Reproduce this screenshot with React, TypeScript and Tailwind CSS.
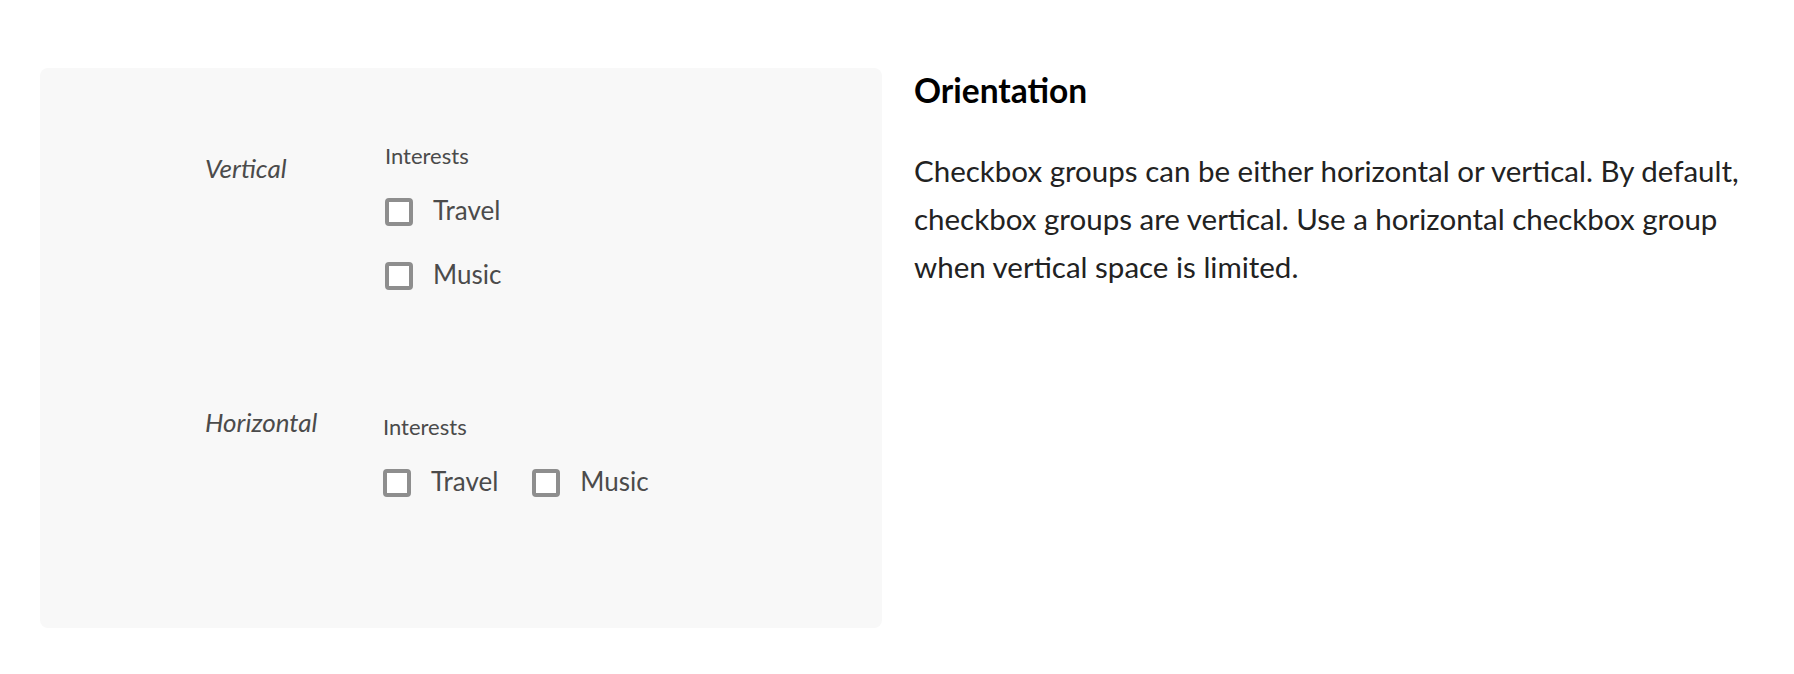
import React from 'react';

const font = { fontFamily: 'Lato, "Noto Sans", sans-serif' };

function Box() {
  return <span className="block h-[28px] w-[28px] shrink-0 rounded-[4px] border-[4px] border-[#8e8e8e] bg-white" />;
}

function CheckItem({ label, gap }: { label: string; gap: string }) {
  return (
    <label className={`flex h-[40px] items-center ${gap}`}>
      <Box />
      <span className="pb-[4px] text-[26px] leading-[28px] text-[#4b4b4b]">{label}</span>
    </label>
  );
}

export default function App() {
  return (
    <div className="flex min-h-[674px] bg-white pl-[40px] pt-[68px]" style={font}>
      {/* Example panel */}
      <div className="flex h-[560px] w-[842px] shrink-0 flex-col rounded-lg bg-[#f8f8f8] pl-[165px] pt-[74px]">
        {/* Vertical */}
        <div className="flex items-start">
          <div className="mt-[10px] w-[180px] text-[26px] italic leading-[32px] text-[#4b4b4b]">Vertical</div>
          <div className="flex flex-col">
            <div className="text-[22px] leading-[28px] text-[#4b4b4b]">Interests</div>
            <div className="mt-[22px] flex flex-col gap-[24px]">
              <CheckItem label="Travel" gap="gap-[20px]" />
              <CheckItem label="Music" gap="gap-[20px]" />
            </div>
          </div>
        </div>

        {/* Horizontal */}
        <div className="mt-[110px] flex items-start">
          <div className="w-[178px] text-[26px] italic leading-[32px] text-[#4b4b4b]">Horizontal</div>
          <div className="mt-[7px] flex flex-col">
            <div className="text-[22px] leading-[28px] text-[#4b4b4b]">Interests</div>
            <div className="mt-[22px] flex gap-[34px]">
              <CheckItem label="Travel" gap="gap-[20px]" />
              <CheckItem label="Music" gap="gap-[20px]" />
            </div>
          </div>
        </div>
      </div>

      {/* Description */}
      <div className="ml-[32px] w-[850px] pt-[2px]">
        <h2 className="text-[33.5px] font-bold leading-[40px] text-black">Orientation</h2>
        <p className="mt-[37px] text-[29.5px] leading-[48px] text-[#222222]">
          Checkbox groups can be either horizontal or vertical. By default, checkbox groups are vertical. Use a
          horizontal checkbox group when vertical space is limited.
        </p>
      </div>
    </div>
  );
}
